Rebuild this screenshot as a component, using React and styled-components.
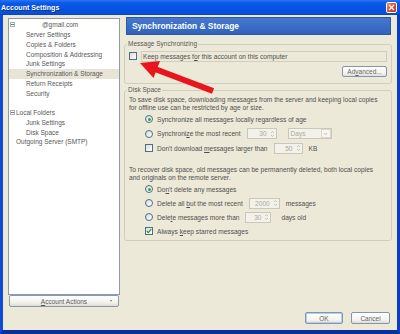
import React from 'react';
import styled, { createGlobalStyle } from 'styled-components';

const GlobalStyle = createGlobalStyle`
  html, body {
    margin: 0;
    padding: 0;
    background: #ffffff;
  }
  body {
    font-family: "Liberation Sans", Arial, sans-serif;
  }
  * {
    box-sizing: border-box;
  }
`;

const Window = styled.div`
  position: relative;
  width: 400px;
  height: 334px;
  display: flex;
  flex-direction: column;
  overflow: hidden;
  background: #0c45d4;
`;

const TitleBar = styled.div`
  height: 15px;
  flex: none;
  display: flex;
  align-items: center;
  justify-content: space-between;
  padding: 0 3px 0 1px;
  background: linear-gradient(#2b74f2 0%, #0a5ae9 20%, #0453e2 60%, #0a4fd6 90%, #083fbd 100%);
  color: #ffffff;
  font-weight: bold;
  font-size: 7.1px;
  text-shadow: 1px 1px 0 #0a2a80;
`;

const CloseBox = styled.div`
  width: 11px;
  height: 11px;
  border: 1px solid #ffffff;
  border-radius: 2px;
  background: linear-gradient(135deg, #ef8a68, #d9461f 60%, #c0391a);
  display: flex;
  align-items: center;
  justify-content: center;
`;

const Body = styled.div`
  flex: 1;
  display: flex;
  flex-direction: column;
  background: #ece9d8;
  border-left: 3px solid #0f4ad6;
  border-right: 3px solid #0a3cc2;
  border-bottom: 4px solid #0b2e9c;
  color: #505050;
  font-size: 6.6px;
`;

const Main = styled.div`
  height: 293px;
  display: flex;
  gap: 4px;
  padding: 2px 5px 0 5px;
`;

const LeftCol = styled.div`
  width: 112px;
  display: flex;
  flex-direction: column;
`;

const Tree = styled.div`
  flex: 1;
  margin-top: 1px;
  padding-top: 1px;
  background: #ffffff;
  border: 1px solid #8e9aaa;
  display: flex;
  flex-direction: column;
`;

const TreeRow = styled.div`
  height: 9.75px;
  flex: none;
  display: flex;
  align-items: center;
  padding-left: ${p => p.$indent}px;
  margin-top: ${p => p.$gap || 0}px;
  background: ${p => (p.$selected ? '#e8e5d6' : 'transparent')};
  color: #585858;
  font-size: 6.5px;
  white-space: nowrap;
`;

const Expander = styled.span`
  width: 5px;
  height: 5px;
  flex: none;
  border: 1px solid #a3adbb;
  display: flex;
  align-items: center;
  justify-content: center;
  margin-right: ${p => p.$after}px;
  &::after {
    content: '';
    width: 3px;
    height: 1px;
    background: #6d7a8c;
  }
`;

const DropButton = styled.div`
  height: 12px;
  margin: 0 1px 1px 1px;
  border: 1px solid #8b99ad;
  border-radius: 2px;
  background: linear-gradient(#ffffff, #f1f0ea 70%, #dcdad0);
  display: flex;
  align-items: center;
  justify-content: center;
  position: relative;
  color: #5a5a5a;
  font-size: 6.5px;
`;

const Caret = styled.span`
  position: absolute;
  right: 6px;
  top: 4px;
  width: 0;
  height: 0;
  border-left: 1.5px solid transparent;
  border-right: 1.5px solid transparent;
  border-top: 2px solid #777;
`;

const RightCol = styled.div`
  flex: 1;
  display: flex;
  flex-direction: column;
`;

const Header = styled.div`
  height: 18px;
  margin: 0 1px 0 2px;
  padding-left: 5px;
  display: flex;
  align-items: center;
  background: linear-gradient(#4678cc, #3a6bc4 60%, #3263ba);
  border: 1px solid #2d58a8;
  color: #ffffff;
  font-weight: bold;
  font-size: 8.4px;
`;

const Group = styled.fieldset`
  margin: ${p => p.$top}px 0 0 0;
  padding: 0 4px ${p => p.$bottom}px 2px;
  border: 1px solid #d0cebf;
  border-radius: 3px;
  min-width: 0;
`;

const Legend = styled.legend`
  padding: 0 1px;
  line-height: 8px;
  font-size: 6.5px;
  color: #585858;
`;

const Content = styled.div`
  padding-left: 2px;
  display: flex;
  flex-direction: column;
`;

const Line = styled.div`
  height: ${p => p.$h}px;
  margin-top: ${p => p.$top || 0}px;
  display: flex;
  align-items: center;
  gap: 4px;
  padding-left: ${p => p.$indent || 0}px;
  white-space: nowrap;
`;

const Para = styled.div`
  margin-top: ${p => p.$top || 0}px;
  line-height: 8px;
  white-space: nowrap;
`;

const LabelBox = styled.div`
  flex: 1;
  height: 11px;
  display: flex;
  align-items: center;
  padding-left: 1px;
  border: 1px solid #cfcdc1;
`;

const Box = styled.span`
  width: 8px;
  height: 8px;
  flex: none;
  border: 1px solid #4a6e92;
  background: linear-gradient(135deg, #dcdcd2, #ffffff);
  display: flex;
  align-items: center;
  justify-content: center;
`;

const Radio = styled.span`
  width: 8px;
  height: 8px;
  flex: none;
  border-radius: 50%;
  border: 1px solid #4a6e92;
  background: linear-gradient(135deg, #dcdcd2, #ffffff);
  display: flex;
  align-items: center;
  justify-content: center;
  &::after {
    content: '';
    width: 3px;
    height: 3px;
    border-radius: 50%;
    background: ${p => (p.$on ? '#36a336' : 'transparent')};
  }
`;

const Key = styled.u`
  text-decoration: underline;
  text-underline-offset: 1px;
`;

const Spin = styled.div`
  width: ${p => p.$w}px;
  height: 11px;
  margin-left: ${p => p.$gap || 2}px;
  flex: none;
  border: 1px solid #c9c7ba;
  background: #f3f2ea;
  display: flex;
  align-items: center;
  justify-content: flex-end;
  color: #aaa89c;
  font-size: 6.6px;
`;

const SpinValue = styled.span`
  padding-right: 2px;
`;

const SpinButtons = styled.span`
  width: 7px;
  height: 100%;
  display: flex;
  align-items: center;
  justify-content: center;
`;

const Select = styled.div`
  width: ${p => p.$w}px;
  height: 11px;
  margin-left: 7px;
  flex: none;
  border: 1px solid #c9c7ba;
  background: #f3f2ea;
  display: flex;
  align-items: center;
  justify-content: space-between;
  padding-left: 2px;
  color: #aaa89c;
`;

const SelectButton = styled.span`
  width: 10px;
  height: 9px;
  border: 1px solid #dad8cc;
  background: #f6f5ef;
  display: flex;
  align-items: center;
  justify-content: center;
`;

const ButtonRow = styled.div`
  display: flex;
  justify-content: flex-end;
  margin-top: ${p => p.$top || 0}px;
  gap: 8px;
`;

const PushButton = styled.div`
  width: ${p => p.$w}px;
  height: ${p => p.$h || 12}px;
  border: 1px solid #8595ad;
  border-radius: 2px;
  background: linear-gradient(#ffffff, #f4f3ee 70%, #dedcd2);
  box-shadow: ${p => (p.$default ? 'inset 0 0 0 1px #b6cbf2' : 'none')};
  display: flex;
  align-items: center;
  justify-content: center;
  color: #666;
  font-size: 6.5px;
`;

const Footer = styled.div`
  flex: 1;
  display: flex;
  justify-content: flex-end;
  align-items: flex-start;
  gap: 8px;
  padding: 4px 7px 0 0;
`;

const Arrow = styled.svg`
  position: absolute;
  left: 0;
  top: 0;
  pointer-events: none;
`;

const SpinArrows = () => (
  <SpinButtons>
    <svg width="5" height="8" viewBox="0 0 5 8">
      <path d="M1 3 L2.5 1.5 L4 3 M1 5 L2.5 6.5 L4 5" stroke="#b9b7ab" strokeWidth="0.8" fill="none" />
    </svg>
  </SpinButtons>
);

const Check = ({ on }) => (
  <Box>
    {on && (
      <svg width="6" height="6" viewBox="0 0 6 6">
        <path d="M0.8 3 L2.4 4.6 L5.2 1.2" stroke="#2a9a2a" strokeWidth="1.3" fill="none" />
      </svg>
    )}
  </Box>
);

const treeItems = [
  { label: 'Server Settings', indent: 17 },
  { label: 'Copies & Folders', indent: 17 },
  { label: 'Composition & Addressing', indent: 17 },
  { label: 'Junk Settings', indent: 17 },
  { label: 'Synchronization & Storage', indent: 17, selected: true },
  { label: 'Return Receipts', indent: 17 },
  { label: 'Security', indent: 17 },
];

export default function App() {
  return (
    <Window>
      <GlobalStyle />
      <TitleBar>
        <span>Account Settings</span>
        <CloseBox>
          <svg width="7" height="7" viewBox="0 0 7 7">
            <path d="M1 1 L6 6 M6 1 L1 6" stroke="#fff" strokeWidth="1.4" />
          </svg>
        </CloseBox>
      </TitleBar>
      <Body>
        <Main>
          <LeftCol>
            <Tree>
              <TreeRow $indent={1}>
                <Expander $after={27} />
                @gmail.com
              </TreeRow>
              {treeItems.map(item => (
                <TreeRow key={item.label} $indent={item.indent} $selected={item.selected}>
                  {item.label}
                </TreeRow>
              ))}
              <TreeRow $indent={1} $gap={9.75}>
                <Expander $after={1} />
                Local Folders
              </TreeRow>
              <TreeRow $indent={17}>Junk Settings</TreeRow>
              <TreeRow $indent={17}>Disk Space</TreeRow>
              <TreeRow $indent={7}>Outgoing Server (SMTP)</TreeRow>
            </Tree>
            <DropButton>
              <span><Key>A</Key>ccount Actions</span>
              <Caret />
            </DropButton>
          </LeftCol>
          <RightCol>
            <Header>Synchronization &amp; Storage</Header>
            <Group $top={5} $bottom={6}>
              <Legend>Message Synchronizing</Legend>
              <Content>
                <Line $h={12} $top={2}>
                  <Check />
                  <LabelBox>Keep messages f<Key>o</Key>r this account on this computer</LabelBox>
                </Line>
                <ButtonRow $top={4}>
                  <PushButton $w={45} $h={11}>Ad<Key>v</Key>anced...</PushButton>
                </ButtonRow>
              </Content>
            </Group>
            <Group $top={2} $bottom={2}>
              <Legend>Disk Space</Legend>
              <Content>
                <Para $top={2}>
                  To save disk space, downloading messages from the server and keeping local copies
                  <br />
                  for offline use can be restricted by age or size.
                </Para>
                <Line $h={14} $indent={16}>
                  <Radio $on />
                  <span>Synchronize all messages locally regardless of age</span>
                </Line>
                <Line $h={15} $indent={16}>
                  <Radio />
                  <span>Synchroni<Key>z</Key>e the most recent</span>
                  <Spin $w={30}>
                    <SpinValue>30</SpinValue>
                    <SpinArrows />
                  </Spin>
                  <Select $w={44}>
                    <span>Days</span>
                    <SelectButton>
                      <svg width="5" height="4" viewBox="0 0 5 4">
                        <path d="M0.8 1 L2.5 2.8 L4.2 1" stroke="#b9b7ab" strokeWidth="0.9" fill="none" />
                      </svg>
                    </SelectButton>
                  </Select>
                </Line>
                <Line $h={14} $indent={16}>
                  <Check />
                  <span>Don't download <Key>m</Key>essages larger than</span>
                  <Spin $w={29}>
                    <SpinValue>50</SpinValue>
                    <SpinArrows />
                  </Spin>
                  <span style={{ marginLeft: 2 }}>KB</span>
                </Line>
                <Para $top={11}>
                  To recover disk space, old messages can be permanently deleted, both local copies
                  <br />
                  and originals on the remote server.
                </Para>
                <Line $h={14} $indent={16}>
                  <Radio $on />
                  <span>Do<Key>n</Key>'t delete any messages</span>
                </Line>
                <Line $h={14} $indent={16}>
                  <Radio />
                  <span>Delete all <Key>b</Key>ut the most recent</span>
                  <Spin $w={31}>
                    <SpinValue>2000</SpinValue>
                    <SpinArrows />
                  </Spin>
                  <span style={{ marginLeft: 2 }}>messages</span>
                </Line>
                <Line $h={14} $indent={16}>
                  <Radio />
                  <span>Dele<Key>t</Key>e messages more than</span>
                  <Spin $w={26}>
                    <SpinValue>30</SpinValue>
                    <SpinArrows />
                  </Spin>
                  <span style={{ marginLeft: 6 }}>days old</span>
                </Line>
                <Line $h={14} $indent={16}>
                  <Check on />
                  <span>Always <Key>k</Key>eep starred messages</span>
                </Line>
              </Content>
            </Group>
          </RightCol>
        </Main>
        <Footer>
          <PushButton $w={38} $default>OK</PushButton>
          <PushButton $w={39}>Cancel</PushButton>
        </Footer>
      </Body>
      <Arrow width="400" height="334" viewBox="0 0 400 334">
        <line x1="155" y1="69" x2="213" y2="91" stroke="#e8161c" strokeWidth="6" />
        <polygon points="140,63 160,61 153.5,78" fill="#e8161c" />
      </Arrow>
    </Window>
  );
}
